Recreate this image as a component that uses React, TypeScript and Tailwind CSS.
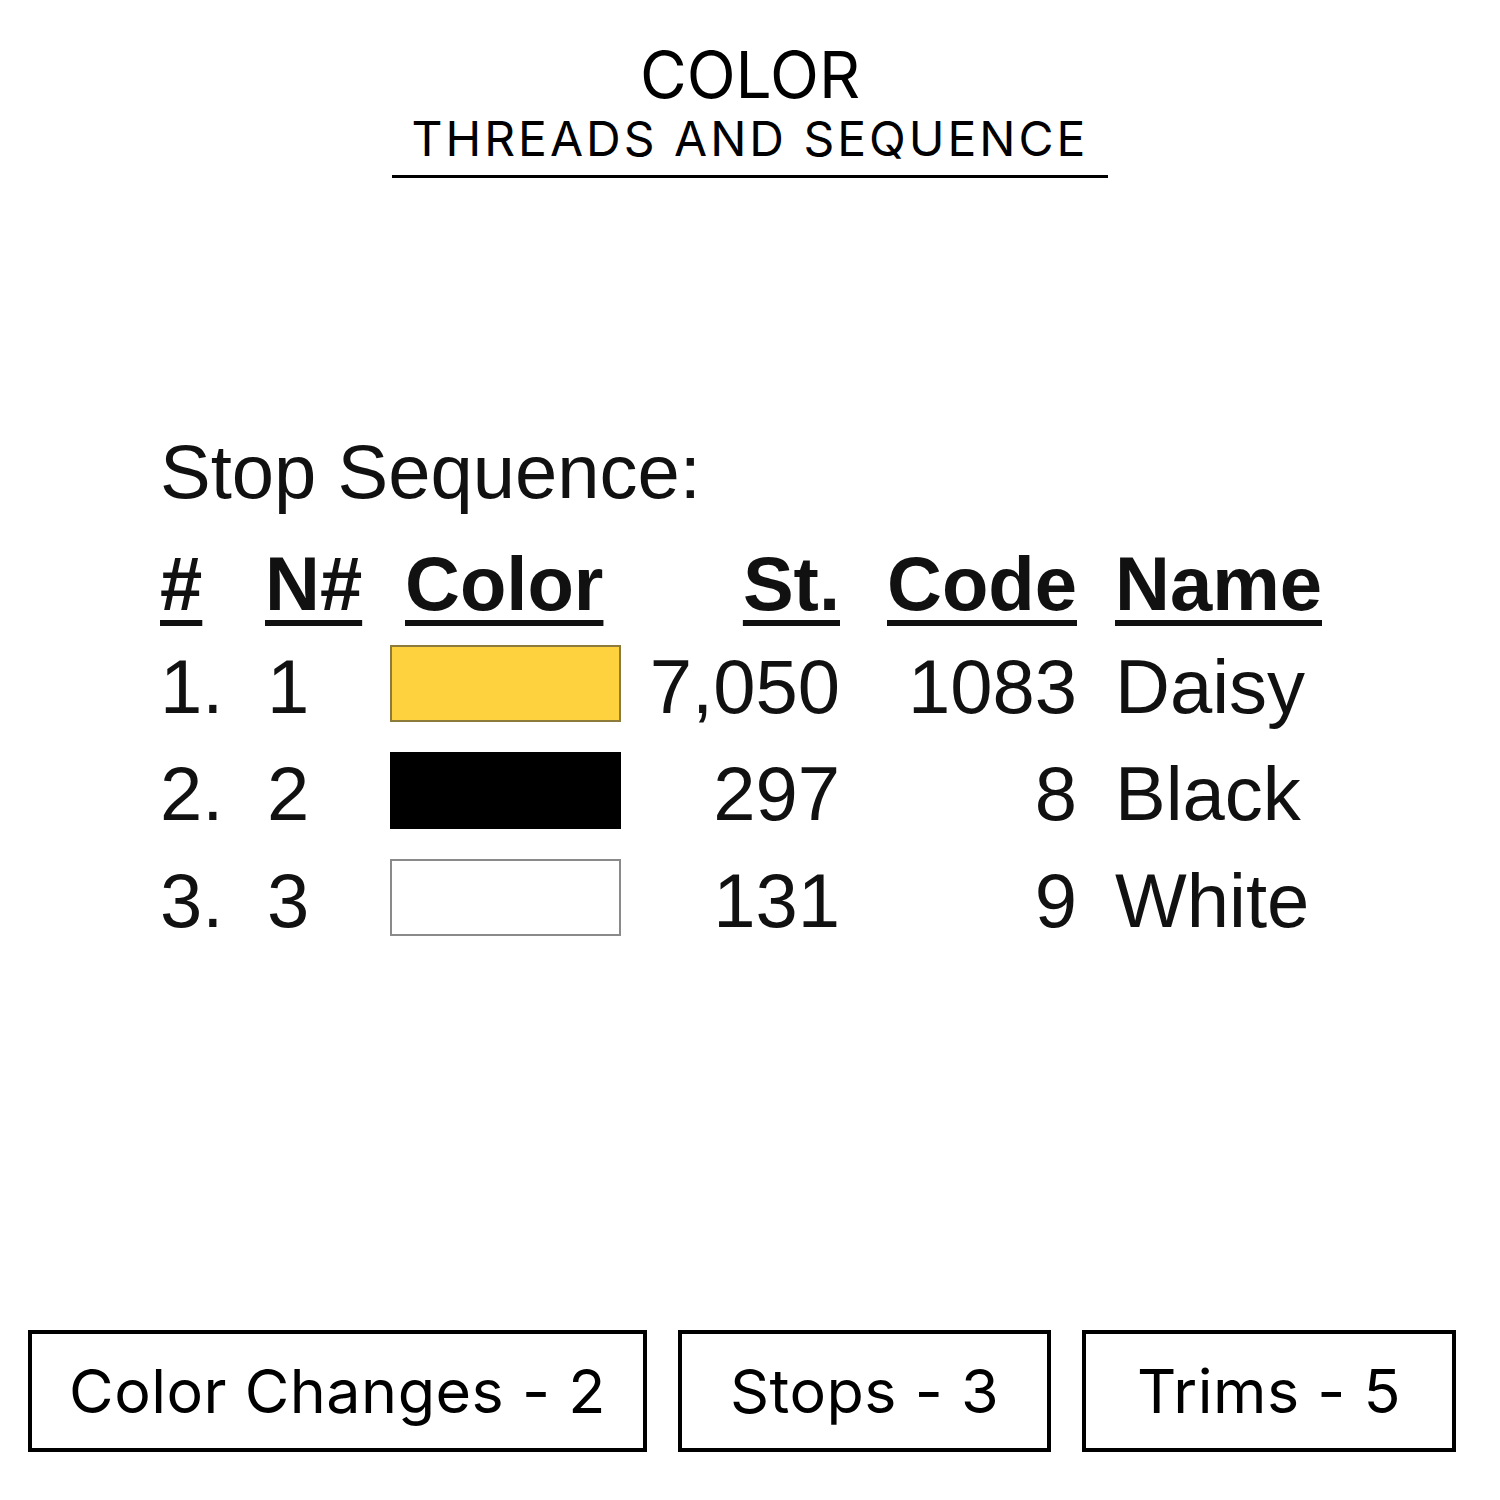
const rows = [
  { n: "1.", needle: "1", swatch: "bg-[#fdd23e] border-[#8d7b3c]", st: "7,050", code: "1083", name: "Daisy" },
  { n: "2.", needle: "2", swatch: "bg-black border-black", st: "297", code: "8", name: "Black" },
  { n: "3.", needle: "3", swatch: "bg-white border-[#8a8a8a]", st: "131", code: "9", name: "White" },
];

const stats = [
  { label: "Color Changes - 2", w: "w-[619px]" },
  { label: "Stops - 3", w: "w-[373px]" },
  { label: "Trims - 5", w: "w-[374px]" },
];

const head = "underline decoration-[length:6px] underline-offset-[10px]";

export default function App() {
  return (
    <div className="flex h-[1500px] w-[1500px] flex-col bg-white text-black">
      {/* title */}
      <div className="flex flex-col items-center font-['Inter',sans-serif]">
        <h1 className="mt-[43px] text-[64px] leading-none font-normal">COLOR</h1>
        <h2 className="mt-[8px] text-[48px] leading-none font-normal tracking-[3px]">THREADS AND SEQUENCE</h2>
        <div className="mt-[12px] h-[3px] w-[716px] bg-black" />
      </div>

      {/* stop sequence table */}
      <div className="mt-[256px] pl-[160px] font-['Liberation_Sans',Arial,sans-serif] text-[76px] leading-none text-[#111]">
        <p>Stop Sequence:</p>
        <div className="mt-[36px] grid h-[76px] grid-cols-[105px_125px_230px_220px_237px_1fr] font-bold">
          <span><span className={head}>#</span></span>
          <span><span className={head}>N#</span></span>
          <span className="pl-[15px]"><span className={head}>Color</span></span>
          <span className="text-right"><span className={head}>St.</span></span>
          <span className="text-right"><span className={head}>Code</span></span>
          <span className="pl-[38px]"><span className={head}>Name</span></span>
        </div>
        <div className="mt-[8px]">
          {rows.map((r) => (
            <div key={r.n} className="grid h-[107px] grid-cols-[105px_125px_230px_220px_237px_1fr] items-center">
              <span className="pt-[6px]">{r.n}</span>
              <span className="pt-[6px] pl-[2px]">{r.needle}</span>
              <div className={`h-[77px] w-[231px] border-2 ${r.swatch}`} />
              <span className="pt-[6px] text-right">{r.st}</span>
              <span className="pt-[6px] text-right">{r.code}</span>
              <span className="pt-[6px] pl-[38px]">{r.name}</span>
            </div>
          ))}
        </div>
      </div>

      {/* counts */}
      <div className="mt-auto mb-[48px] flex gap-[31px] pl-[28px] font-['Inter',sans-serif]">
        {stats.map((s) => (
          <div key={s.label} className={`flex h-[122px] items-center justify-center border-[4px] border-black ${s.w}`}>
            <span className="text-[61px] leading-none tracking-[0.5px]">{s.label}</span>
          </div>
        ))}
      </div>
    </div>
  );
}
